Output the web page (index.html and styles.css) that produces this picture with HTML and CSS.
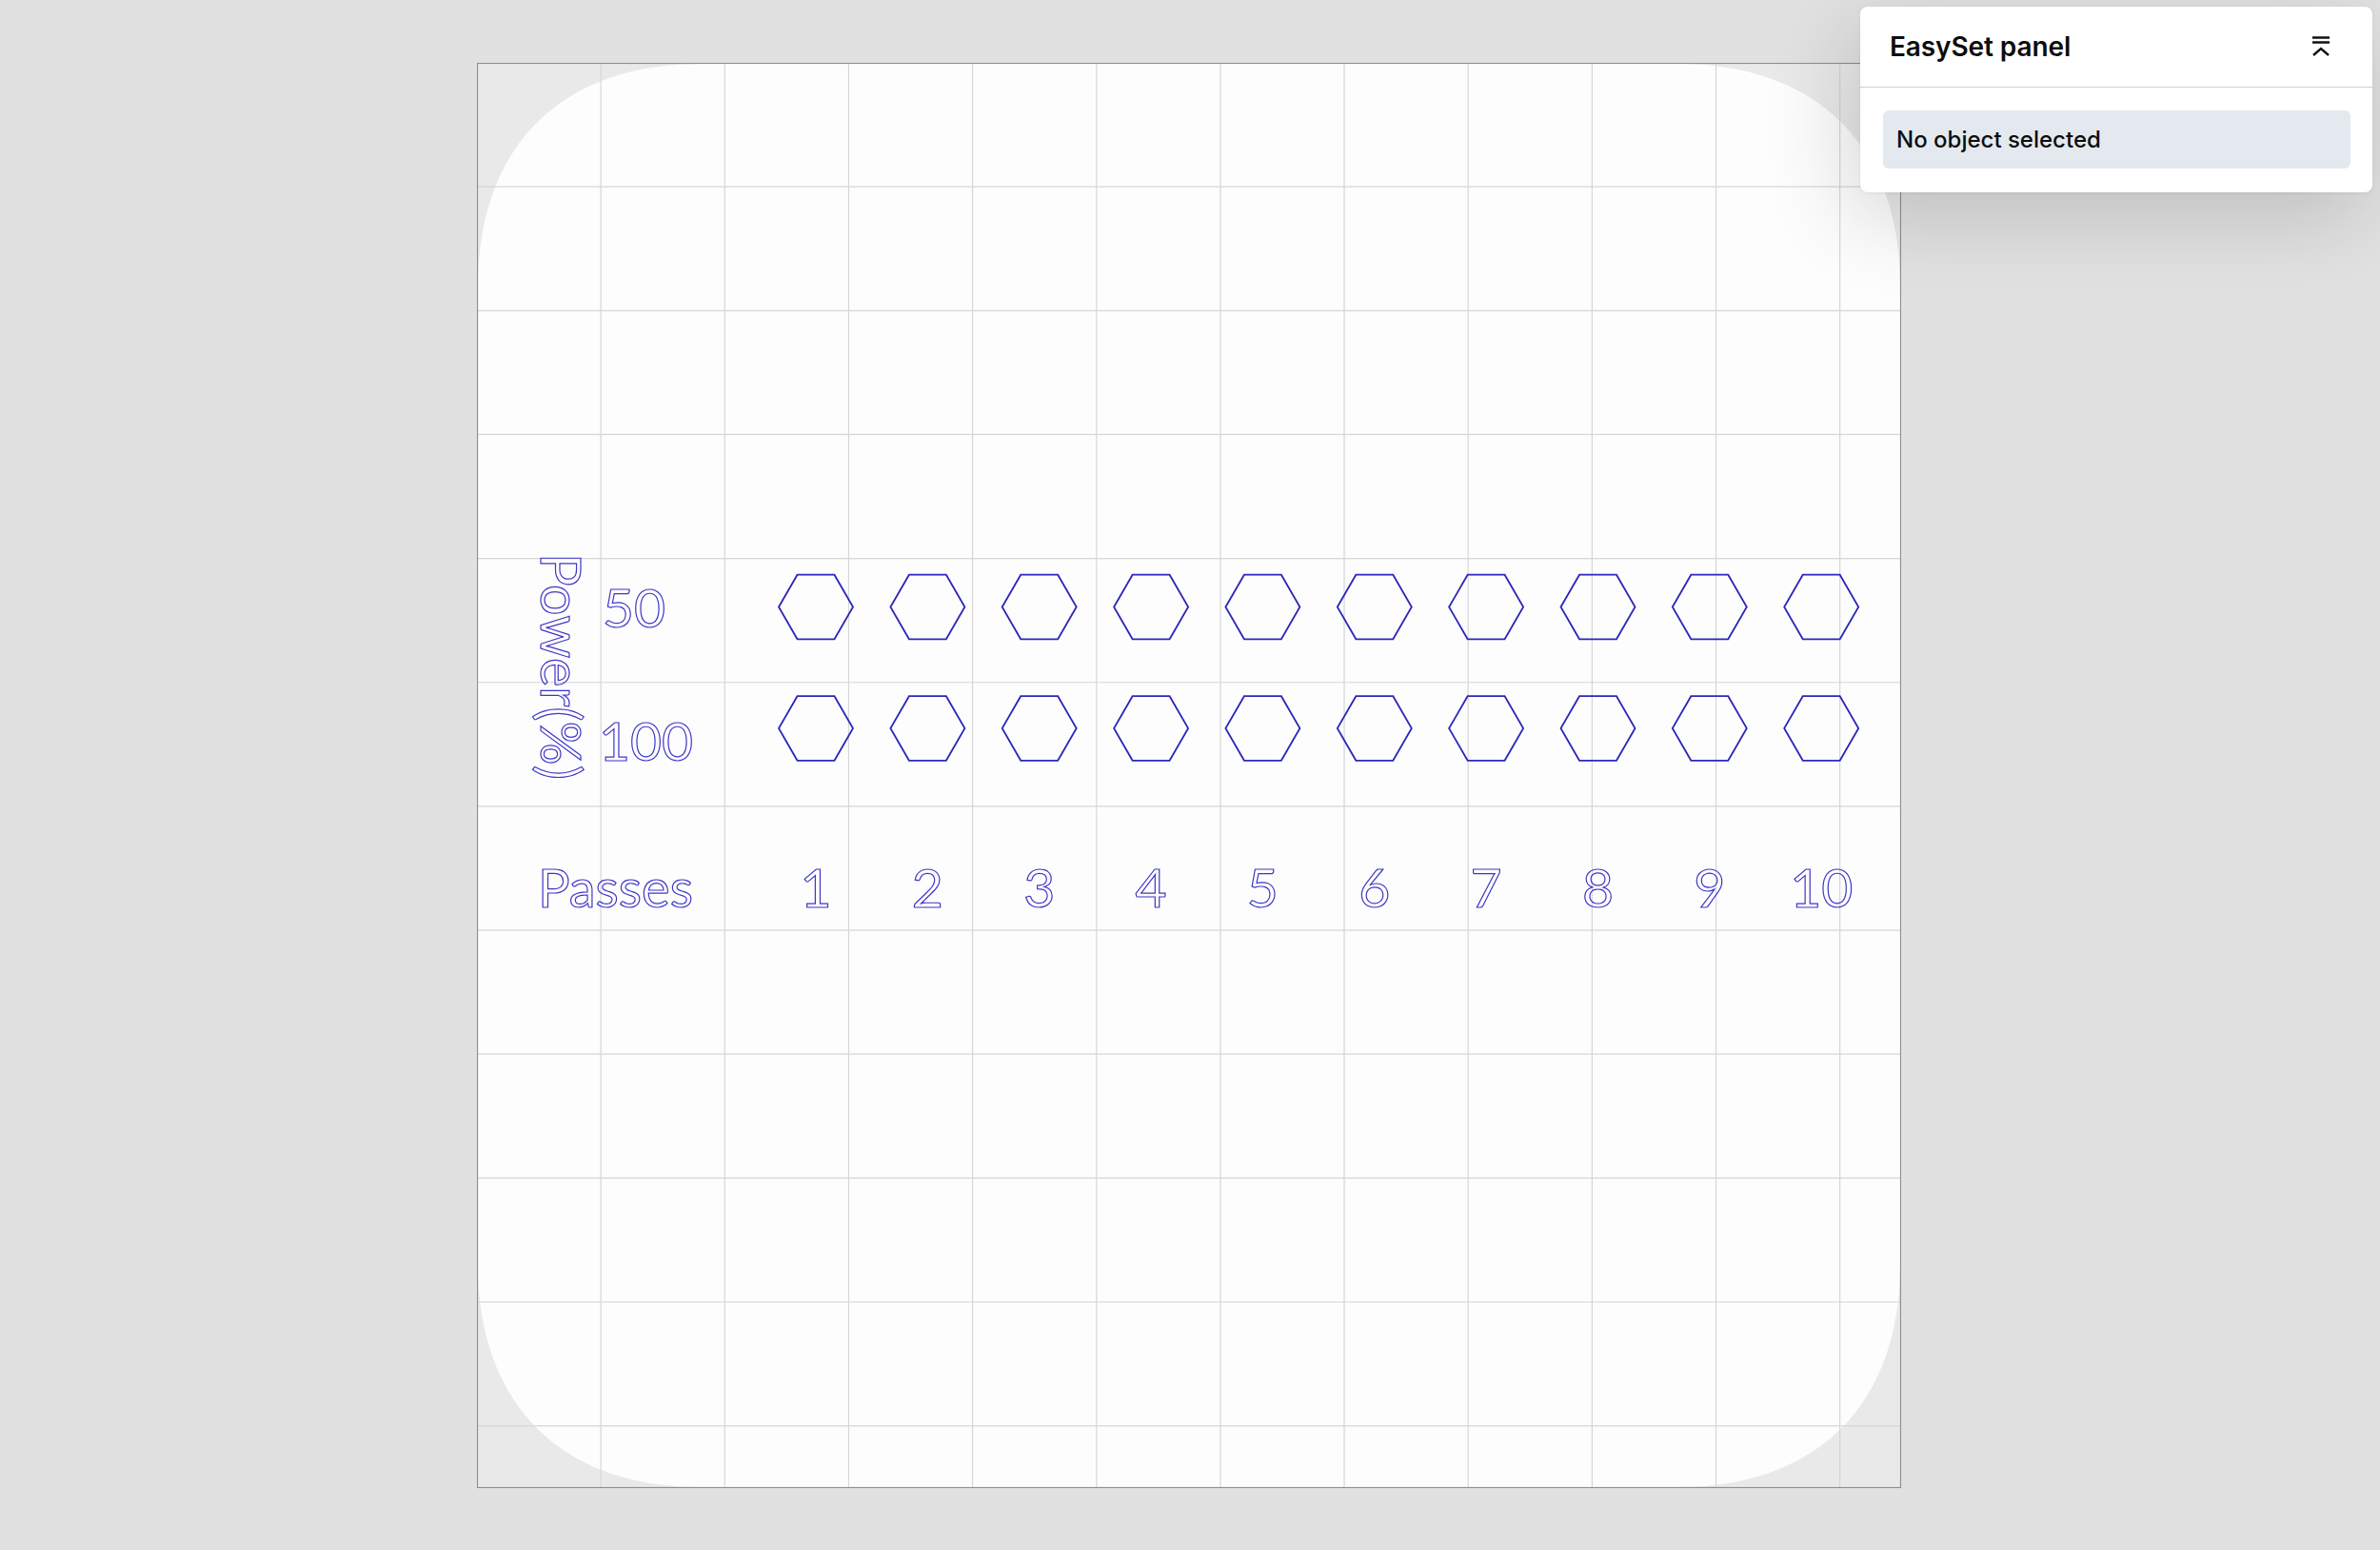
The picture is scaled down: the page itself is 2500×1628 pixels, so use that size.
FILE: index.html
```html
<!DOCTYPE html>
<html lang="en">
<head>
<meta charset="utf-8">
<title>EasySet</title>
<link rel="stylesheet" href="styles.css">
</head>
<body>
<main class="workspace">
  <div class="canvas">
    <svg class="board" width="1496" height="1497" viewBox="0 0 1496 1497" xmlns="http://www.w3.org/2000/svg">
      <rect class="board-bg" x="0" y="0" width="1496" height="1497"/>
      <path class="squircle" d="M235 1 H1261 C1408 1 1495 88 1495 235 V1262 C1495 1409 1408 1496 1261 1496 H235 C88 1496 1 1409 1 1262 V235 C1 88 88 1 235 1 Z"/>
      <g class="grid">
        <line x1="130.15" y1="0" x2="130.15" y2="1497"/>
        <line x1="260.3" y1="0" x2="260.3" y2="1497"/>
        <line x1="390.45" y1="0" x2="390.45" y2="1497"/>
        <line x1="520.6" y1="0" x2="520.6" y2="1497"/>
        <line x1="650.75" y1="0" x2="650.75" y2="1497"/>
        <line x1="780.9" y1="0" x2="780.9" y2="1497"/>
        <line x1="911.05" y1="0" x2="911.05" y2="1497"/>
        <line x1="1041.2" y1="0" x2="1041.2" y2="1497"/>
        <line x1="1171.35" y1="0" x2="1171.35" y2="1497"/>
        <line x1="1301.5" y1="0" x2="1301.5" y2="1497"/>
        <line x1="1431.65" y1="0" x2="1431.65" y2="1497"/>
        <line x1="0" y1="130.15" x2="1496" y2="130.15"/>
        <line x1="0" y1="260.3" x2="1496" y2="260.3"/>
        <line x1="0" y1="390.45" x2="1496" y2="390.45"/>
        <line x1="0" y1="520.6" x2="1496" y2="520.6"/>
        <line x1="0" y1="650.75" x2="1496" y2="650.75"/>
        <line x1="0" y1="780.9" x2="1496" y2="780.9"/>
        <line x1="0" y1="911.05" x2="1496" y2="911.05"/>
        <line x1="0" y1="1041.2" x2="1496" y2="1041.2"/>
        <line x1="0" y1="1171.35" x2="1496" y2="1171.35"/>
        <line x1="0" y1="1301.5" x2="1496" y2="1301.5"/>
        <line x1="0" y1="1431.65" x2="1496" y2="1431.65"/>
      </g>
      <rect class="board-border" x="0.5" y="0.5" width="1495" height="1496"/>
      <g class="hexes">
        <polygon points="317,571.5 336.5,537.7 375.5,537.7 395,571.5 375.5,605.3 336.5,605.3"/>
        <polygon points="434.4,571.5 453.9,537.7 492.9,537.7 512.4,571.5 492.9,605.3 453.9,605.3"/>
        <polygon points="551.7,571.5 571.2,537.7 610.2,537.7 629.7,571.5 610.2,605.3 571.2,605.3"/>
        <polygon points="669.1,571.5 688.6,537.7 727.6,537.7 747.1,571.5 727.6,605.3 688.6,605.3"/>
        <polygon points="786.4,571.5 805.9,537.7 844.9,537.7 864.4,571.5 844.9,605.3 805.9,605.3"/>
        <polygon points="903.8,571.5 923.3,537.7 962.3,537.7 981.8,571.5 962.3,605.3 923.3,605.3"/>
        <polygon points="1021.1,571.5 1040.6,537.7 1079.6,537.7 1099.1,571.5 1079.6,605.3 1040.6,605.3"/>
        <polygon points="1138.5,571.5 1158,537.7 1197,537.7 1216.5,571.5 1197,605.3 1158,605.3"/>
        <polygon points="1255.8,571.5 1275.3,537.7 1314.3,537.7 1333.8,571.5 1314.3,605.3 1275.3,605.3"/>
        <polygon points="1373.2,571.5 1392.7,537.7 1431.7,537.7 1451.2,571.5 1431.7,605.3 1392.7,605.3"/>
        <polygon points="317,699 336.5,665.2 375.5,665.2 395,699 375.5,732.8 336.5,732.8"/>
        <polygon points="434.4,699 453.9,665.2 492.9,665.2 512.4,699 492.9,732.8 453.9,732.8"/>
        <polygon points="551.7,699 571.2,665.2 610.2,665.2 629.7,699 610.2,732.8 571.2,732.8"/>
        <polygon points="669.1,699 688.6,665.2 727.6,665.2 747.1,699 727.6,732.8 688.6,732.8"/>
        <polygon points="786.4,699 805.9,665.2 844.9,665.2 864.4,699 844.9,732.8 805.9,732.8"/>
        <polygon points="903.8,699 923.3,665.2 962.3,665.2 981.8,699 962.3,732.8 923.3,732.8"/>
        <polygon points="1021.1,699 1040.6,665.2 1079.6,665.2 1099.1,699 1079.6,732.8 1040.6,732.8"/>
        <polygon points="1138.5,699 1158,665.2 1197,665.2 1216.5,699 1197,732.8 1158,732.8"/>
        <polygon points="1255.8,699 1275.3,665.2 1314.3,665.2 1333.8,699 1314.3,732.8 1275.3,732.8"/>
        <polygon points="1373.2,699 1392.7,665.2 1431.7,665.2 1451.2,699 1431.7,732.8 1392.7,732.8"/>
      </g>
      <g class="labels">
        <text class="axis-title axis-vertical" transform="translate(67 515) rotate(90)">Power(%)</text>
        <text x="132" y="593">50</text>
        <text x="128" y="733">100</text>
        <text class="axis-title" x="64" y="887">Passes</text>
        <g class="col-labels">
          <text x="356" y="887">1</text>
          <text x="473.4" y="887">2</text>
          <text x="590.7" y="887">3</text>
          <text x="708.1" y="887">4</text>
          <text x="825.4" y="887">5</text>
          <text x="942.8" y="887">6</text>
          <text x="1060.1" y="887">7</text>
          <text x="1177.5" y="887">8</text>
          <text x="1294.8" y="887">9</text>
          <text x="1412.2" y="887">10</text>
        </g>
      </g>
    </svg>
  </div>
</main>

<aside class="panel">
  <header class="panel-header">
    <h2 class="panel-title">EasySet panel</h2>
    <button class="collapse-btn" type="button" aria-label="Collapse panel">
      <svg width="22" height="24" viewBox="0 0 22 24" xmlns="http://www.w3.org/2000/svg">
        <path d="M2 2.5 H20 M2 7.5 H20 M3 21 L11 14 L19 21" fill="none" stroke="#111" stroke-width="2.4" stroke-linecap="butt" stroke-linejoin="miter"/>
      </svg>
    </button>
  </header>
  <div class="panel-body">
    <div class="empty-state">No object selected</div>
  </div>
</aside>
</body>
</html>
```

FILE: styles.css
```css
html, body {
  margin: 0;
  padding: 0;
}

body {
  width: 2500px;
  height: 1628px;
  overflow: hidden;
  background: #e1e1e1;
  font-family: "Inter", "Noto Sans", sans-serif;
  position: relative;
}

.workspace {
  padding: 66px 0 0 501px;
}

.canvas {
  width: 1496px;
  height: 1497px;
}

.board {
  display: block;
}

.board-bg {
  fill: #e9e9e9;
}

.squircle {
  fill: #fdfdfd;
}

.grid line {
  stroke: #d6d6d6;
  stroke-width: 1.2;
}

.board-border {
  fill: none;
  stroke: #8d8d8d;
  stroke-width: 1.2;
}

.hexes polygon {
  fill: none;
  stroke: #2c28b8;
  stroke-width: 1.8;
  stroke-linejoin: miter;
}

.labels text {
  font-family: "Lato", "Open Sans", sans-serif;
  font-size: 57px;
  font-weight: 400;
  fill: none;
  stroke: #3d37c6;
  stroke-width: 1.2;
}

.labels .axis-title {
  font-size: 56px;
}

.labels .axis-vertical {
  font-size: 57.5px;
}

.col-labels text {
  text-anchor: middle;
}

.panel {
  position: absolute;
  top: 7px;
  left: 1954px;
  width: 538px;
  height: 195px;
  box-sizing: border-box;
  background: #ffffff;
  border-radius: 8px;
  box-shadow: -10px 24px 90px rgba(0, 0, 0, 0.16), 0 1px 4px rgba(0, 0, 0, 0.06);
  display: flex;
  flex-direction: column;
}

.panel-header {
  height: 85px;
  box-sizing: border-box;
  border-bottom: 1px solid #cfcfcf;
  display: flex;
  align-items: center;
  justify-content: space-between;
  padding: 0 43px 0 31px;
}

.panel-title {
  margin: 0;
  font-family: "Inter", "Noto Sans", sans-serif;
  font-size: 28px;
  font-weight: 600;
  color: #0d0d0d;
  letter-spacing: -0.1px;
}

.collapse-btn {
  border: 0;
  background: none;
  padding: 0;
  width: 22px;
  height: 24px;
  display: flex;
  cursor: pointer;
}

.panel-body {
  padding: 24px 23px 24px 24px;
}

.empty-state {
  height: 61px;
  box-sizing: border-box;
  background: #e4e9ef;
  border-radius: 6px;
  display: flex;
  align-items: center;
  padding-left: 14px;
  font-size: 24px;
  font-weight: 500;
  color: #0d0d0d;
  letter-spacing: 0;
}
```
